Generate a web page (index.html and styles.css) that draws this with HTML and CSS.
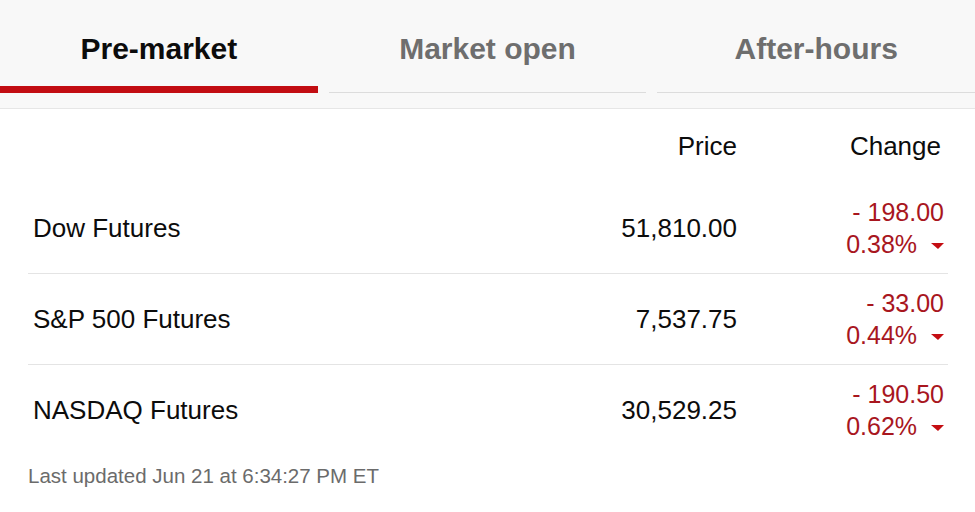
FILE: index.html
```
<!DOCTYPE html>
<html lang="en">
<head>
    <meta charset="UTF-8">
    <meta name="viewport" content="width=device-width, initial-scale=1.0">
    <title>Markets</title>
    <link rel="stylesheet" href="styles.css">
</head>
<body>
    <!-- Session tabs -->
    <div class="tabs">
        <div class="tab active">Pre-market</div>
        <div class="tab">Market open</div>
        <div class="tab">After-hours</div>
    </div>

    <!-- Futures table -->
    <div class="market-table">
        <div class="row head">
            <div class="name"></div>
            <div class="price">Price</div>
            <div class="change">Change</div>
        </div>
        <div class="row">
            <div class="name">Dow Futures</div>
            <div class="price">51,810.00</div>
            <div class="change down">
                <div>- 198.00</div>
                <div>0.38% <span class="arrow"></span></div>
            </div>
        </div>
        <div class="row">
            <div class="name">S&amp;P 500 Futures</div>
            <div class="price">7,537.75</div>
            <div class="change down">
                <div>- 33.00</div>
                <div>0.44% <span class="arrow"></span></div>
            </div>
        </div>
        <div class="row last">
            <div class="name">NASDAQ Futures</div>
            <div class="price">30,529.25</div>
            <div class="change down">
                <div>- 190.50</div>
                <div>0.62% <span class="arrow"></span></div>
            </div>
        </div>
        <p class="updated">Last updated Jun 21 at 6:34:27 PM ET</p>
    </div>
</body>
</html>
```

FILE: styles.css
```
body {
    margin: 0;
    padding: 0;
    background-color: #fff;
    font-family: "Liberation Sans", Arial, sans-serif;
    color: #0c0c0c;
}
.tabs {
    display: flex;
    gap: 11px;
    background-color: #f8f8f8;
    padding-bottom: 15px;
    border-bottom: 1px solid #e6e6e6;
}
.tab {
    flex: 1;
    box-sizing: border-box;
    height: 93px;
    padding-top: 32px;
    text-align: center;
    font-size: 30px;
    line-height: 34px;
    font-weight: bold;
    color: #6e6e6e;
    border-bottom: 1px solid #dcdcdc;
}
.tab.active {
    color: #0c0c0c;
    border-bottom: 7px solid #c20d12;
}
.market-table {
    margin: 0 27px 0 28px;
}
.row {
    display: grid;
    grid-template-columns: 1fr 300px 211px;
    align-items: center;
    height: 90px;
    border-bottom: 1px solid #e4e4e4;
    font-size: 26px;
}
.row.head {
    height: 74px;
    border-bottom: none;
}
.row.last {
    border-bottom: none;
}
.name {
    padding-left: 5px;
}
.price {
    text-align: right;
}
.change {
    text-align: right;
    padding-right: 4px;
    line-height: 32px;
}
.head .change {
    padding-right: 7px;
}
.change.down {
    color: #a8161e;
    font-size: 25px;
}
.arrow {
    display: inline-block;
    width: 0;
    height: 0;
    margin-left: 7px;
    border-left: 7px solid transparent;
    border-right: 6px solid transparent;
    border-top: 6px solid #c40d12;
    vertical-align: middle;
}
.updated {
    margin: 9px 0 0;
    font-size: 20.5px;
    line-height: 24px;
    color: #6b6b6b;
}
```
